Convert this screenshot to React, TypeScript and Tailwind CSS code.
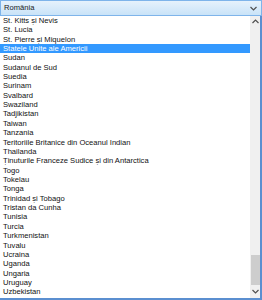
import React from "react";

const items = [
  "St. Kitts și Nevis",
  "St. Lucia",
  "St. Pierre și Miquelon",
  "Statele Unite ale Americii",
  "Sudan",
  "Sudanul de Sud",
  "Suedia",
  "Surinam",
  "Svalbard",
  "Swaziland",
  "Tadjikistan",
  "Taiwan",
  "Tanzania",
  "Teritoriile Britanice din Oceanul Indian",
  "Thailanda",
  "Ținuturile Franceze Sudice și din Antarctica",
  "Togo",
  "Tokelau",
  "Tonga",
  "Trinidad și Tobago",
  "Tristan da Cunha",
  "Tunisia",
  "Turcia",
  "Turkmenistan",
  "Tuvalu",
  "Ucraina",
  "Uganda",
  "Ungaria",
  "Uruguay",
  "Uzbekistan",
];

function Chevron({ up = false }: { up?: boolean }) {
  return (
    <svg width="7" height="5" viewBox="0 0 7 5" className={up ? "rotate-180" : ""}>
      <path d="M0.5 1 L3.5 4 L6.5 1" fill="none" stroke="#505050" strokeWidth="1.2" />
    </svg>
  );
}

export default function App() {
  return (
    <div
      className="w-[262px] h-[300px] bg-white overflow-hidden flex flex-col text-[#000]"
      style={{ fontFamily: '"Liberation Sans", Arial, sans-serif' }}
    >
      <div className="h-[16px] shrink-0 border border-[#7eb4ea] bg-gradient-to-b from-[#e6f2fc] to-[#c9e3f8] flex items-center justify-between pl-[3px] pr-[4px]">
        <span className="text-[7.6px] leading-none text-[#1a1a1a]">România</span>
        <Chevron />
      </div>
      <div className="flex flex-1 min-h-0 border-r-2 border-b-2 border-[#5b8fd0]">
        <div className="flex-1 flex flex-col">
          {items.map((it, i) => (
            <div
              key={it}
              className={
                "h-[9.37px] flex items-center pl-[3px] text-[7.6px] leading-none whitespace-nowrap " +
                (i === 3 ? "bg-[#3399ff] text-white" : "text-[#111]")
              }
            >
              {it}
            </div>
          ))}
        </div>
        <div className="w-[10px] bg-[#f0f0f0] flex flex-col items-center">
          <div className="h-[10px] flex items-center justify-center">
            <Chevron up />
          </div>
          <div className="flex-1 flex flex-col justify-end">
            <div className="w-[9px] h-[30px] bg-[#cdcdcd]" />
          </div>
          <div className="h-[13px] flex items-center justify-center">
            <Chevron />
          </div>
        </div>
      </div>
    </div>
  );
}
